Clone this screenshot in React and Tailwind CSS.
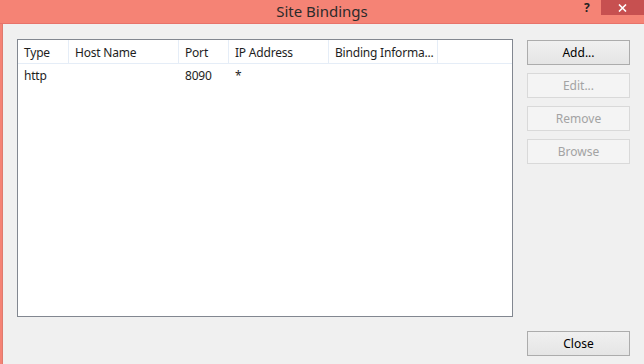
const columns = [
  { label: "Type", width: "w-[51px]" },
  { label: "Host Name", width: "w-[110px]" },
  { label: "Port", width: "w-[50px]" },
  { label: "IP Address", width: "w-[100px]" },
  { label: "Binding Informa...", width: "w-[109px]" },
];

const row = ["http", "", "8090", "*", ""];

function DialogButton({ children, disabled }) {
  return (
    <button
      type="button"
      disabled={disabled}
      className={
        disabled
          ? "h-[25px] w-full border border-[#d9d9d9] bg-[#f4f4f4] pt-[1px] text-[12px] text-[#a3a3a3]"
          : "h-[25px] w-full border border-[#acacac] bg-gradient-to-b from-[#f0f0f0] to-[#e5e5e5] pt-[1px] text-[12px] text-black"
      }
    >
      {children}
    </button>
  );
}

export default function App() {
  return (
    <div className="flex h-[364px] w-[644px] flex-col overflow-hidden bg-[#f58375] font-['Noto_Sans',sans-serif]">
      {/* title bar */}
      <div className="relative flex h-[24px] shrink-0 items-center justify-center border-b border-[#e8736a]">
        <span className="text-[15px] leading-none text-[#2b2b2b]">Site Bindings</span>
        <span className="absolute left-[584px] top-0 text-[12px] font-bold leading-[15px] text-[#222]">?</span>
        <div className="absolute right-0 top-0 flex h-[15px] w-[43px] items-center justify-center bg-[#c75050]">
          <svg width="9" height="8" viewBox="0 0 9 8">
            <path d="M1 0.5 L8 7.5 M8 0.5 L1 7.5" stroke="#fff" strokeWidth="1.6" />
          </svg>
        </div>
      </div>

      {/* body */}
      <div className="ml-[2px] flex flex-1 border-l border-[#e07a6e] bg-[#f0f0f0] pl-[14px] pt-[15px]">
        <div className="flex h-[278px] w-[496px] flex-col border border-[#828790] bg-white">
          <div className="flex h-[24px] border-b border-[#e5edf7]">
            {columns.map((c) => (
              <div
                key={c.label}
                className={`${c.width} flex items-center overflow-hidden whitespace-nowrap border-r border-[#e5edf7] pl-[6px] pt-[2px] text-[12px] tracking-[-0.2px] text-[#1e1e1e]`}
              >
                {c.label}
              </div>
            ))}
          </div>
          <div className="flex h-[21px]">
            {columns.map((c, i) => (
              <div
                key={c.label}
                className={`${c.width} flex items-center whitespace-nowrap pl-[6px] pt-[2px] text-[12px] tracking-[-0.2px] text-[#1e1e1e]`}
              >
                {row[i]}
              </div>
            ))}
          </div>
        </div>

        <div className="ml-[14px] flex w-[103px] flex-col gap-[8px] pb-[8px] pt-[1px]">
          <DialogButton>Add...</DialogButton>
          <DialogButton disabled>Edit...</DialogButton>
          <DialogButton disabled>Remove</DialogButton>
          <DialogButton disabled>Browse</DialogButton>
          <div className="mt-auto">
            <DialogButton>Close</DialogButton>
          </div>
        </div>
      </div>
    </div>
  );
}
